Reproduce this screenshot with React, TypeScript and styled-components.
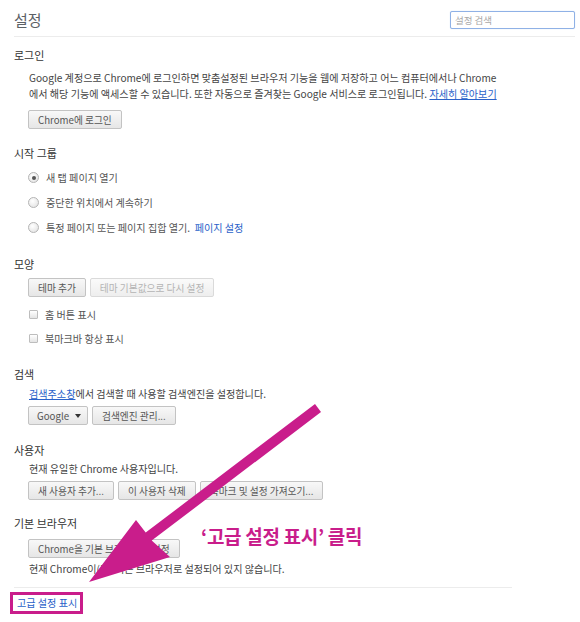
import React from "react";
import styled, { createGlobalStyle } from "styled-components";

const MAGENTA = "#c91d8b";
const LINK = "#2a62c9";

const GlobalStyle = createGlobalStyle`
  html, body { margin: 0; padding: 0; background: #ffffff; }
  body {
    font-family: "Noto Sans CJK KR", "Noto Sans", sans-serif;
    color: #444444;
    width: 580px;
    height: 622px;
    overflow: hidden;
  }
`;

const Page = styled.div`
  position: relative;
  width: 580px;
  height: 622px;
  padding-left: 14px;
  box-sizing: border-box;
`;

const Header = styled.header`
  display: flex;
  align-items: center;
  justify-content: space-between;
  box-sizing: border-box;
  height: 37px;
  padding-top: 4px;
  margin-right: 5px;
  border-bottom: 1px solid #ececec;
`;

const Title = styled.h1`
  margin: 0;
  font-size: 15px;
  line-height: 18px;
  font-weight: 400;
  color: #5c6166;
`;

const Search = styled.input`
  box-sizing: border-box;
  width: 125px;
  height: 18px;
  margin-top: -1px;
  padding: 0 4px;
  border: 1px solid #8fb1e6;
  border-radius: 2px;
  box-shadow: 0 0 1px #b8cff2;
  font-family: inherit;
  font-size: 9.5px;
  outline: none;
  &::placeholder { color: #a8a8a8; }
`;

const Section = styled.section<{ $gap: number }>`
  margin-top: ${(p) => p.$gap}px;
`;

const Heading = styled.h3`
  margin: 0;
  font-size: 11px;
  line-height: 16px;
  font-weight: 400;
  color: #333333;
`;

const Body = styled.div`
  padding-left: 15px;
  display: flex;
  flex-direction: column;
  align-items: flex-start;
`;

const Text = styled.p<{ $mt?: number }>`
  margin: ${(p) => p.$mt ?? 0}px 0 0;
  font-size: 10.1px;
  line-height: 16px;
  color: #444444;
  white-space: nowrap;
`;

const Link = styled.a<{ $underline?: boolean }>`
  color: ${LINK};
  text-decoration: ${(p) => (p.$underline ? "underline" : "none")};
  cursor: pointer;
`;

const ButtonRow = styled.div<{ $mt: number }>`
  display: flex;
  gap: 4px;
  margin-top: ${(p) => p.$mt}px;
  margin-left: -1px;
`;

const Button = styled.button<{ $compact?: boolean }>`
  box-sizing: border-box;
  height: 19px;
  padding: ${(p) => (p.$compact ? "0 6px 0 8px" : "0 9px")};
  display: inline-flex;
  align-items: center;
  gap: 6px;
  border: 1px solid #c3c3c3;
  border-radius: 2px;
  background: linear-gradient(#f8f8f8, #e6e6e6);
  font-family: inherit;
  font-size: 9.7px;
  color: #555555;
  &:disabled {
    color: #b4b4b4;
    border-color: #dadada;
    background: linear-gradient(#fafafa, #eeeeee);
  }
`;

const Caret = styled.span`
  width: 0;
  height: 0;
  border-left: 3.5px solid transparent;
  border-right: 3.5px solid transparent;
  border-top: 4px solid #333333;
`;

const OptionRow = styled.label<{ $h: number }>`
  display: flex;
  align-items: center;
  height: ${(p) => p.$h}px;
  font-size: 10.1px;
  color: #555555;
  gap: 7px;
  white-space: nowrap;
`;

const Radio = styled.span<{ $on?: boolean }>`
  position: relative;
  box-sizing: border-box;
  width: 11px;
  height: 11px;
  margin-left: -1px;
  border-radius: 50%;
  border: 1px solid #b4b4b4;
  background: radial-gradient(circle at 40% 35%, #ffffff, #dedede);
  &::after {
    content: "";
    display: ${(p) => (p.$on ? "block" : "none")};
    position: absolute;
    left: 2.5px;
    top: 2.5px;
    width: 4px;
    height: 4px;
    border-radius: 50%;
    background: #555555;
  }
`;

const Check = styled.span`
  box-sizing: border-box;
  width: 9px;
  height: 9px;
  border: 1px solid #bdbdbd;
  border-radius: 1px;
  background: linear-gradient(#ffffff, #e4e4e4);
`;

const Spacer = styled.div<{ $h: number }>`
  height: ${(p) => p.$h}px;
`;

const Divider = styled.hr`
  margin: 10px 0 0;
  width: 498px;
  border: 0;
  border-top: 1px solid #ececec;
  height: 0;
`;

const Highlight = styled.div`
  display: inline-block;
  margin: 1px 0 0 -4px;
  padding: 0 3px 0 4px;
  border: 3px solid ${MAGENTA};
  font-size: 10.1px;
  line-height: 16px;
`;

const Annotation = styled.div`
  position: absolute;
  left: 201px;
  top: 525px;
  font-size: 19px;
  line-height: 21px;
  font-weight: 700;
  color: ${MAGENTA};
  white-space: nowrap;
  letter-spacing: -0.3px;
`;

const ArrowLayer = styled.svg`
  position: absolute;
  left: 0;
  top: 0;
  pointer-events: none;
`;

export default function App() {
  return (
    <>
      <GlobalStyle />
      <Page>
        <Header>
          <Title>설정</Title>
          <Search placeholder="설정 검색" />
        </Header>

        <Section $gap={10}>
          <Heading>로그인</Heading>
          <Body>
            <Text $mt={7}>
              Google 계정으로 Chrome에 로그인하면 맞춤설정된 브라우저 기능을 웹에 저장하고 어느 컴퓨터에서나 Chrome
              <br />
              에서 해당 기능에 액세스할 수 있습니다. 또한 자동으로 즐겨찾는 Google 서비스로 로그인됩니다.{" "}
              <Link $underline>자세히 알아보기</Link>
            </Text>
            <ButtonRow $mt={8}>
              <Button>Chrome에 로그인</Button>
            </ButtonRow>
          </Body>
        </Section>

        <Section $gap={16}>
          <Heading>시작 그룹</Heading>
          <Body>
            <Spacer $h={4} />
            <OptionRow $h={25}>
              <Radio $on />새 탭 페이지 열기
            </OptionRow>
            <OptionRow $h={25}>
              <Radio />
              중단한 위치에서 계속하기
            </OptionRow>
            <OptionRow $h={25}>
              <Radio />
              <span>
                특정 페이지 또는 페이지 집합 열기. &nbsp;<Link>페이지 설정</Link>
              </span>
            </OptionRow>
          </Body>
        </Section>

        <Section $gap={16}>
          <Heading>모양</Heading>
          <Body>
            <ButtonRow $mt={6}>
              <Button>테마 추가</Button>
              <Button disabled>테마 기본값으로 다시 설정</Button>
            </ButtonRow>
            <Spacer $h={5} />
            <OptionRow $h={24}>
              <Check />홈 버튼 표시
            </OptionRow>
            <OptionRow $h={24}>
              <Check />
              북마크바 항상 표시
            </OptionRow>
          </Body>
        </Section>

        <Section $gap={16}>
          <Heading>검색</Heading>
          <Body>
            <Text $mt={4}>
              <Link $underline>검색주소창</Link>에서 검색할 때 사용할 검색엔진을 설정합니다.
            </Text>
            <ButtonRow $mt={4}>
              <Button $compact>
                Google <Caret />
              </Button>
              <Button>검색엔진 관리...</Button>
            </ButtonRow>
          </Body>
        </Section>

        <Section $gap={17}>
          <Heading>사용자</Heading>
          <Body>
            <Text $mt={3}>현재 유일한 Chrome 사용자입니다.</Text>
            <ButtonRow $mt={4}>
              <Button>새 사용자 추가...</Button>
              <Button>이 사용자 삭제</Button>
              <Button>북마크 및 설정 가져오기...</Button>
            </ButtonRow>
          </Body>
        </Section>

        <Section $gap={15}>
          <Heading>기본 브라우저</Heading>
          <Body>
            <ButtonRow $mt={8}>
              <Button>Chrome을 기본 브라우저로 설정</Button>
            </ButtonRow>
            <Text $mt={3}>현재 Chrome이(가) 기본 브라우저로 설정되어 있지 않습니다.</Text>
          </Body>
        </Section>

        <Divider />
        <Highlight>
          <Link>고급 설정 표시</Link>
        </Highlight>

        <ArrowLayer width="580" height="622" viewBox="0 0 580 622">
          <polygon
            fill={MAGENTA}
            points="321,412 315,404 145.7,532.6 136,520 89,582 170,557 151.7,540.6"
          />
        </ArrowLayer>
        <Annotation>‘고급 설정 표시’ 클릭</Annotation>
      </Page>
    </>
  );
}
